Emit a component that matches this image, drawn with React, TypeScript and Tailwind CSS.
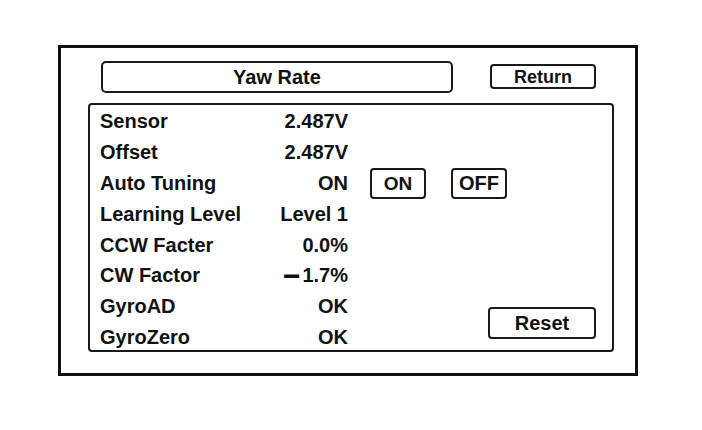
import type { ReactNode } from 'react';

const rows: { label: string; value: ReactNode }[] = [
  { label: 'Sensor', value: '2.487V' },
  { label: 'Offset', value: '2.487V' },
  { label: 'Auto Tuning', value: 'ON' },
  { label: 'Learning Level', value: 'Level 1' },
  { label: 'CCW Facter', value: '0.0%' },
  {
    label: 'CW Factor',
    value: (
      <>
        <span className="inline-block scale-x-[1.5] scale-y-[1.5] mr-[5px]">{'\u2212'}</span>1.7%
      </>
    ),
  },
  { label: 'GyroAD', value: 'OK' },
  { label: 'GyroZero', value: 'OK' },
];

const Btn = ({ children, className }: { children: string; className: string }) => (
  <div className={`flex items-center justify-center border-2 border-[#1a1a1a] rounded-[4px] leading-none font-bold ${className}`}>
    {children}
  </div>
);

export default function App() {
  return (
    <div className="w-[702px] h-[430px] bg-white pt-[45px] pl-[58px] text-[#111] font-['Liberation_Sans',Arial,sans-serif]">
      <div className="w-[580px] h-[331px] border-[3px] border-[#111]">
        <div className="flex items-start pt-[13px]">
          <div className="ml-[40px] w-[352px] h-[32px] border-2 border-[#1a1a1a] rounded-[5px] flex items-center justify-center text-[20px] font-bold leading-none">
            Yaw Rate
          </div>
          <Btn className="ml-[37px] mt-[3px] w-[106px] h-[25px] text-[18px]">Return</Btn>
        </div>

        <div className="ml-[27px] mt-[10px] w-[526px] h-[249px] border-2 border-[#1a1a1a] rounded-[4px] pt-[1px] grid grid-cols-[10px_180px_68px_1fr] auto-rows-[30.8px] text-[20px] font-bold leading-none">
          {rows.map((r, i) => (
            <div key={r.label} className="contents">
              <div className="col-start-2 flex items-center" style={{ gridRowStart: i + 1 }}>{r.label}</div>
              <div className="col-start-3 flex items-center justify-end whitespace-nowrap" style={{ gridRowStart: i + 1 }}>{r.value}</div>
            </div>
          ))}
          <div className="col-start-4 row-start-3 flex items-center gap-[25px] pl-[22px]">
            <Btn className="w-[56px] h-[31px] text-[19px]">ON</Btn>
            <Btn className="w-[56px] h-[31px] text-[20px]">OFF</Btn>
          </div>
          <div className="col-start-4 row-start-7 row-span-2 flex items-center justify-end pr-[16px] pt-[3px]">
            <Btn className="w-[108px] h-[32px] text-[20px]">Reset</Btn>
          </div>
        </div>
      </div>
    </div>
  );
}
